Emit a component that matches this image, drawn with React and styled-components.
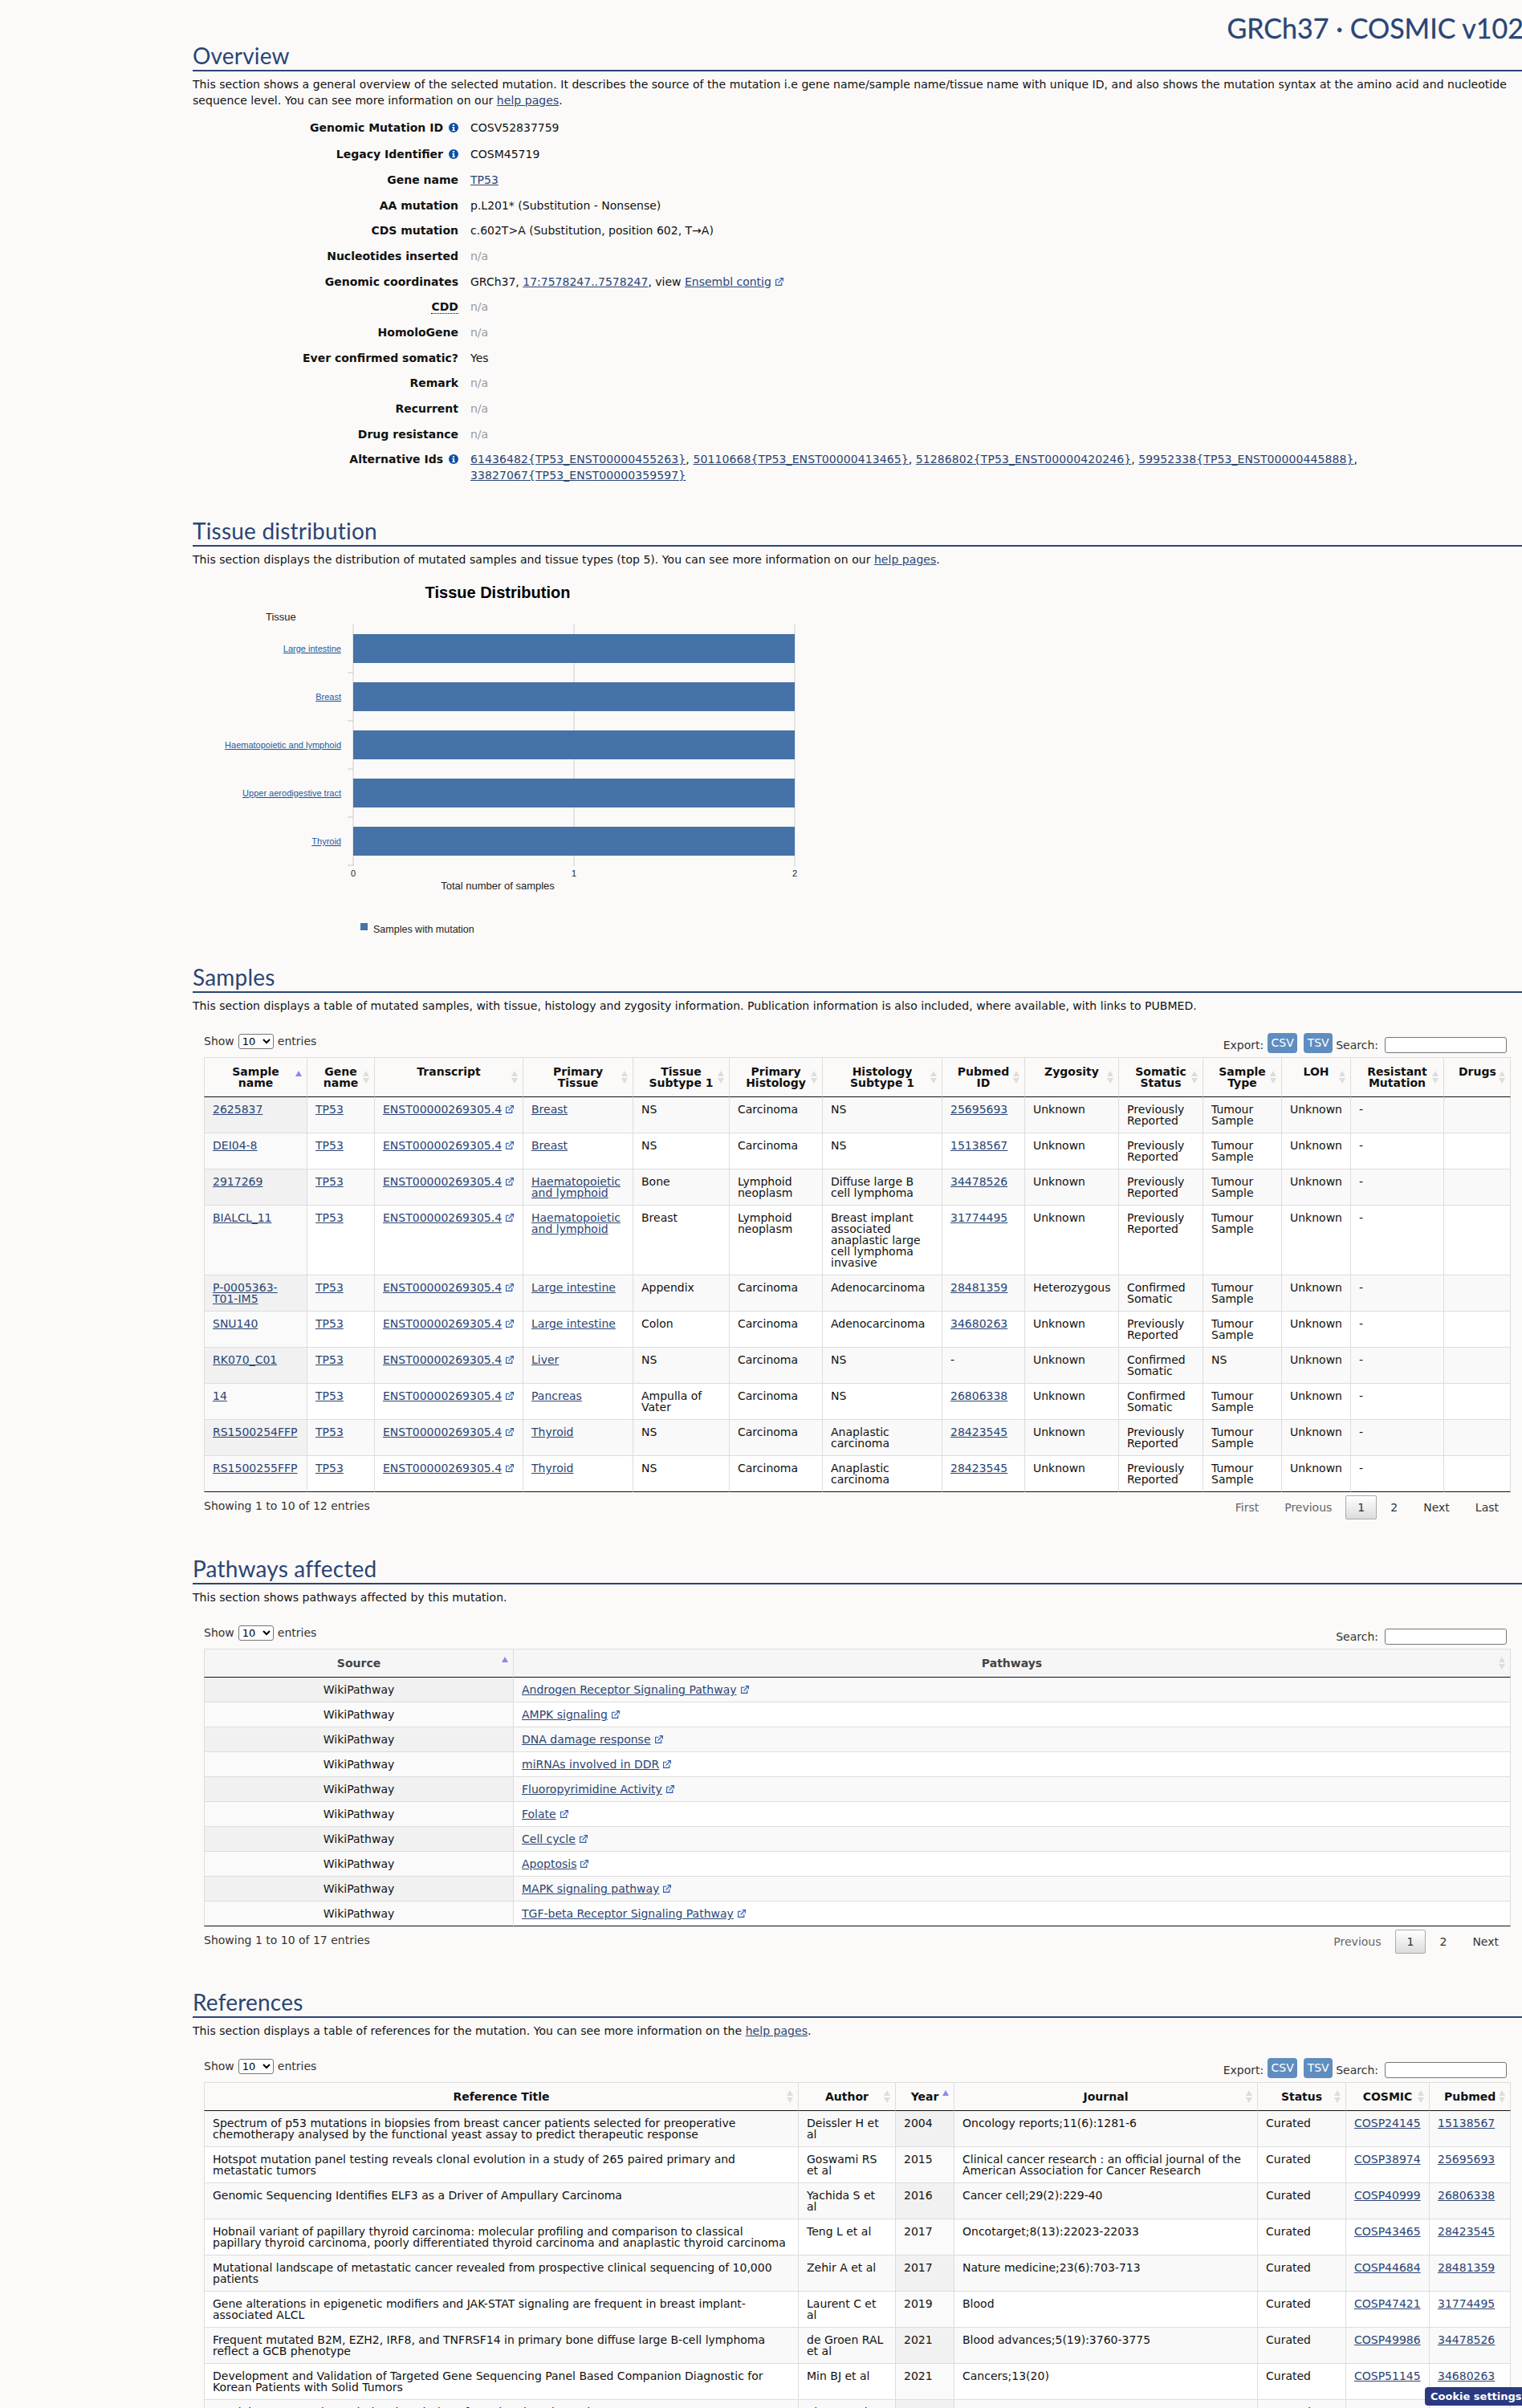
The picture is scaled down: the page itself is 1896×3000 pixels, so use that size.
import React from "react";
import styled, { createGlobalStyle } from "styled-components";

const Global = createGlobalStyle`
  html, body { margin: 0; height: 3000px; overflow: hidden; background: #fbfaf9; }
  body { font: 14px/20px "DejaVu Sans", Verdana, sans-serif; color: #111; }
  #root { height: 3000px; overflow: hidden; }
`;

const Page = styled.div`padding-left: 240px;`;
const TitleBar = styled.div`
  height: 51px; display: flex; justify-content: flex-end; overflow: hidden;
`;
const SiteTitle = styled.div`
  font: 400 34px/40px Lato, "Open Sans", sans-serif; color: #2b4574; margin: 15px -2px 0 0; white-space: nowrap;
  -webkit-text-stroke: 0.3px #2b4574;
`;
const Heading = styled.h2`
  margin: ${p => p.$top || 0}px 0 0; height: 36px; border-bottom: 2px solid #2b4574;
  font: 400 28px/36px Lato, "Open Sans", sans-serif; color: #2b4574; letter-spacing: 0.2px;
`;
const Intro = styled.p`margin: 6px 14px 0 0; font-size: 14px; line-height: 20px; letter-spacing: 0.04px;`;
const A = styled.a`color: #2b4574; text-decoration: underline;`;

const Facts = styled.div`margin-top: 7px;`;
const Fact = styled.div`
  display: grid; grid-template-columns: 331px 1fr; column-gap: 15px;
  padding: ${p => p.$tall ? "6.5px" : "5.85px"} 0; padding-right: 14px;
`;
const FactLabel = styled.div`text-align: right; font-weight: 700;`;
const AltIds = styled.div`letter-spacing: 0.09px;`;
const Dotted = styled.span`border-bottom: 1px dotted #000;`;
const Muted = styled.span`color: #999;`;
const InfoSvg = styled.svg`width: 12px; height: 12px; margin: -4px 0 -4px 7px; vertical-align: 3px;`;

const Info = () => (
  <InfoSvg viewBox="0 0 12 12">
    <circle cx="6" cy="6" r="6" fill="#0d4ea6" />
    <rect x="4.9" y="2" width="2.2" height="2" fill="#fff" />
    <path d="M4.2 5h2.9v4.1h.9v1H4.2v-1h.8V6h-.8z" fill="#fff" />
  </InfoSvg>
);
const ExtWrap = styled.span`white-space: nowrap;`;
const ExtSvg = styled.svg`width: 10px; height: 10px; margin: -3px 0 -3px 5px; vertical-align: 3px;`;
const Ext = () => (
  <ExtSvg viewBox="0 0 10 10" fill="none" stroke="#2a5aa8" strokeWidth="1.1">
    <path d="M4.5 2.2H.6v7.2h7.2V5.5" />
    <path d="M3.5 6.5L8.6 1.4M5.6.6h3.8v3.8" />
  </ExtSvg>
);

const ChartSvg = styled.svg`display: block; margin-top: 0;`;
const cats = ["Large intestine", "Breast", "Haematopoietic and lymphoid", "Upper aerodigestive tract", "Thyroid"];
const Chart = () => (
  <ChartSvg width="770" height="492" viewBox="240 707 770 492" fontFamily="'Liberation Sans', Arial, sans-serif">
    <text x="620" y="745" textAnchor="middle" fontSize="20" fontWeight="700" fill="#000">Tissue Distribution</text>
    <text x="331" y="773" fontSize="13" fill="#222">Tissue</text>
    {[440, 715, 990].map(x => <line key={x} x1={x} x2={x} y1="778" y2="1079" stroke="#ddd" strokeWidth="1.5" />)}
    {[838, 898, 958, 1018, 1078].map(y => <line key={y} x1="433" x2="440" y1={y} y2={y} stroke="#c8c8c8" />)}
    {cats.map((c, i) => (
      <g key={c}>
        <rect x="440" y={790 + i * 60} width="550" height="36" fill="#4572a7" />
        <text x="425" y={812 + i * 60} textAnchor="end" fontSize="11" fill="#1c5aa0" textDecoration="underline">{c}</text>
      </g>
    ))}
    {[[440, "0"], [715, "1"], [990, "2"]].map(([x, t]) => (
      <text key={t} x={x} y="1092" textAnchor="middle" fontSize="11" fill="#222">{t}</text>
    ))}
    <text x="620" y="1108" textAnchor="middle" fontSize="13" fill="#222">Total number of samples</text>
    <rect x="449" y="1150" width="9" height="9" fill="#4572a7" />
    <text x="465" y="1162" fontSize="12.5" fill="#222">Samples with mutation</text>
  </ChartSvg>
);

const Block = styled.div`margin: 25px 14px 0;`;
const Toolbar = styled.div`display: flex; justify-content: space-between; height: 29px;`;
const LenBox = styled.label`display: flex; align-items: flex-start; gap: 5px; color: #333; line-height: 19px;`;
const LenSelect = styled.select`
  width: 44px; height: 19px; font: 13px "DejaVu Sans", sans-serif; padding: 0; background: #fff;
  border: 1px solid #767676; border-radius: 3px; color: #000;
`;
const Tools = styled.div`display: flex; align-items: center; align-self: flex-end; margin: 0 5px 5px 0; height: 20px; color: #333;`;
const ExportBtn = styled.span`
  display: flex; align-items: center; justify-content: center; width: ${p => p.$w}px; height: 25px; margin-left: ${p => p.$ml}px;
  background: #5f8dc0; color: #fff; border-radius: 4px; position: relative; top: -3px;
`;
const SearchInput = styled.input`
  width: 152px; height: 20px; box-sizing: border-box; margin-left: 8px; background: #fff;
  border: 1px solid #767676; border-radius: 3px; padding: 0;
`;
const SearchLabel = styled.span`margin-left: 4px;`;

const Table = styled.table`
  width: 1628px; table-layout: fixed; border-collapse: separate; border-spacing: 0;
  line-height: 14px; font-size: 14px;
`;
const Col = styled.col`width: ${p => p.$w}px;`;
const Th = styled.th`
  position: relative; padding: 10px 18px; font-weight: 700; text-align: center; vertical-align: top;
  border-top: 1px solid #ddd; border-bottom: 1px solid #111; border-left: 1px solid #ddd;
  background: ${p => p.$bg || "transparent"}; color: ${p => p.$ink || "#111"};
  &:last-child { border-right: 1px solid #ddd; }
  &::before {
    content: ""; position: absolute; right: 6px; top: calc(50% - 8px);
    border: 4px solid transparent; border-top: 0; border-bottom: 7px solid ${p => p.$asc ? "#8a8ae8" : "#ddd"};
  }
  &::after {
    content: ${p => p.$asc ? "none" : '""'}; position: absolute; right: 6px; top: calc(50% + 1px);
    border: 4px solid transparent; border-bottom: 0; border-top: 7px solid #ddd;
  }
`;
const Tr = styled.tr`
  & > td { background: #fff; }
  & > td:nth-child(${p => p.$sorted}) { background: #fafafa; }
  &:nth-child(odd) > td { background: #f9f9f9; }
  &:nth-child(odd) > td:nth-child(${p => p.$sorted}) { background: #f1f1f1; }
  &:not(:first-child) > td { border-top: 1px solid #ddd; }
  &:last-child > td { border-bottom: 1px solid #111; }
`;
const Td = styled.td`
  padding: 8px 10px; vertical-align: top; border-left: 1px solid #ddd;
  text-align: ${p => p.$center ? "center" : "left"};
  &:last-child { border-right: 1px solid #ddd; }
`;

const Footer = styled.div`display: flex; justify-content: space-between; align-items: flex-start;`;
const InfoText = styled.div`padding-top: 10px; line-height: 14px; color: #333;`;
const Pager = styled.div`display: flex; margin-top: 4px;`;
const PageBtn = styled.span`
  height: 30px; box-sizing: border-box; padding: 0 14px; margin-left: 2px; display: flex; align-items: center;
  border: 1px solid ${p => p.$on ? "#aaa" : "transparent"}; border-radius: 2px;
  color: ${p => p.$off ? "#666" : "#333"};
  background: ${p => p.$on ? "linear-gradient(#fff, #dcdcdc)" : "transparent"};
`;
const Cookie = styled.div`
  position: fixed; right: 0; bottom: 3px; width: 121px; height: 23px; box-sizing: border-box; padding-left: 7px;
  background: #2a3a80; color: #fff; font-weight: 700; font-size: 13px; line-height: 23px; white-space: nowrap;
  overflow: hidden; border-radius: 4px 0 0 4px;
`;

const Toolbars = ({ exports }) => (
  <Toolbar>
    <LenBox>Show <LenSelect defaultValue="10"><option>10</option><option>25</option><option>50</option></LenSelect> entries</LenBox>
    <Tools>
      {exports && <>Export: <ExportBtn $w={37} $ml={5}>CSV</ExportBtn><ExportBtn $w={36} $ml={8}>TSV</ExportBtn></>}
      <SearchLabel>Search:</SearchLabel><SearchInput />
    </Tools>
  </Toolbar>
);
const Pages = ({ list }) => (
  <Pager>
    {list.map(t => <PageBtn key={t} $on={t === "1"} $off={t === "First" || t === "Previous"}>{t}</PageBtn>)}
  </Pager>
);

const L = ({ children }) => <A href="#">{children}</A>;
const E = ({ children }) => <ExtWrap><A href="#">{children}</A><Ext /></ExtWrap>;

const sampleHead = [["Sample name", 128, true], ["Gene name", 84], ["Transcript", 185], ["Primary Tissue", 137], ["Tissue Subtype 1", 120], ["Primary Histology", 116], ["Histology Subtype 1", 149], ["Pubmed ID", 103], ["Zygosity", 117], ["Somatic Status", 105], ["Sample Type", 98], ["LOH", 86], ["Resistant Mutation", 116], ["Drugs", 84]];
const PR = "Previously Reported", CS = "Confirmed Somatic", TS = "Tumour Sample";
const samples = [
  ["2625837", "Breast", "NS", "Carcinoma", "NS", "25695693", "Unknown", PR, TS],
  ["DEI04-8", "Breast", "NS", "Carcinoma", "NS", "15138567", "Unknown", PR, TS],
  ["2917269", "Haematopoietic and lymphoid", "Bone", "Lymphoid neoplasm", "Diffuse large B cell lymphoma", "34478526", "Unknown", PR, TS],
  ["BIALCL_11", "Haematopoietic and lymphoid", "Breast", "Lymphoid neoplasm", "Breast implant associated anaplastic large cell lymphoma invasive", "31774495", "Unknown", PR, TS],
  ["P-0005363-T01-IM5", "Large intestine", "Appendix", "Carcinoma", "Adenocarcinoma", "28481359", "Heterozygous", CS, TS],
  ["SNU140", "Large intestine", "Colon", "Carcinoma", "Adenocarcinoma", "34680263", "Unknown", PR, TS],
  ["RK070_C01", "Liver", "NS", "Carcinoma", "NS", "-", "Unknown", CS, "NS"],
  ["14", "Pancreas", "Ampulla of Vater", "Carcinoma", "NS", "26806338", "Unknown", CS, TS],
  ["RS1500254FFP", "Thyroid", "NS", "Carcinoma", "Anaplastic carcinoma", "28423545", "Unknown", PR, TS],
  ["RS1500255FFP", "Thyroid", "NS", "Carcinoma", "Anaplastic carcinoma", "28423545", "Unknown", PR, TS],
];
const pathways = ["Androgen Receptor Signaling Pathway", "AMPK signaling", "DNA damage response", "miRNAs involved in DDR", "Fluoropyrimidine Activity", "Folate", "Cell cycle", "Apoptosis", "MAPK signaling pathway", "TGF-beta Receptor Signaling Pathway"];
const refHead = [["Reference Title", 740], ["Author", 121], ["Year", 73, true], ["Journal", 378], ["Status", 110], ["COSMIC", 104], ["Pubmed", 102]];
const refs = [
  ["Spectrum of p53 mutations in biopsies from breast cancer patients selected for preoperative chemotherapy analysed by the functional yeast assay to predict therapeutic response", "Deissler H et al", "2004", "Oncology reports;11(6):1281-6", "COSP24145", "15138567"],
  ["Hotspot mutation panel testing reveals clonal evolution in a study of 265 paired primary and metastatic tumors", "Goswami RS et al", "2015", "Clinical cancer research : an official journal of the American Association for Cancer Research", "COSP38974", "25695693"],
  ["Genomic Sequencing Identifies ELF3 as a Driver of Ampullary Carcinoma", "Yachida S et al", "2016", "Cancer cell;29(2):229-40", "COSP40999", "26806338"],
  ["Hobnail variant of papillary thyroid carcinoma: molecular profiling and comparison to classical papillary thyroid carcinoma, poorly differentiated thyroid carcinoma and anaplastic thyroid carcinoma", "Teng L et al", "2017", "Oncotarget;8(13):22023-22033", "COSP43465", "28423545"],
  ["Mutational landscape of metastatic cancer revealed from prospective clinical sequencing of 10,000 patients", "Zehir A et al", "2017", "Nature medicine;23(6):703-713", "COSP44684", "28481359"],
  ["Gene alterations in epigenetic modifiers and JAK-STAT signaling are frequent in breast implant-associated ALCL", "Laurent C et al", "2019", "Blood", "COSP47421", "31774495"],
  ["Frequent mutated B2M, EZH2, IRF8, and TNFRSF14 in primary bone diffuse large B-cell lymphoma reflect a GCB phenotype", "de Groen RAL et al", "2021", "Blood advances;5(19):3760-3775", "COSP49986", "34478526"],
  ["Development and Validation of Targeted Gene Sequencing Panel Based Companion Diagnostic for Korean Patients with Solid Tumors", "Min BJ et al", "2021", "Cancers;13(20)", "COSP51145", "34680263"],
  ["Spatial Heterogeneity and Clonal Evolution of Head and Neck Carcinoma", "Kim S et al", "2022", "", "COSP52207", "35000000"],
];

const facts = [
  ["Genomic Mutation ID", "COSV52837759", true],
  ["Legacy Identifier", "COSM45719", true],
  ["Gene name", <L>TP53</L>],
  ["AA mutation", "p.L201* (Substitution - Nonsense)"],
  ["CDS mutation", "c.602T>A (Substitution, position 602, T→A)"],
  ["Nucleotides inserted", <Muted>n/a</Muted>],
  ["Genomic coordinates", <>GRCh37, <L>17:7578247..7578247</L>, view <E>Ensembl contig</E></>],
  [<Dotted>CDD</Dotted>, <Muted>n/a</Muted>],
  ["HomoloGene", <Muted>n/a</Muted>],
  ["Ever confirmed somatic?", "Yes"],
  ["Remark", <Muted>n/a</Muted>],
  ["Recurrent", <Muted>n/a</Muted>],
  ["Drug resistance", <Muted>n/a</Muted>],
];

export default function App() {
  return (
    <Page>
      <Global />
      <TitleBar><SiteTitle>GRCh37 · COSMIC v102</SiteTitle></TitleBar>

      <Heading>Overview</Heading>
      <Intro>This section shows a general overview of the selected mutation. It describes the source of the mutation i.e gene name/sample name/tissue name with unique ID, and also shows the mutation syntax at the amino acid and nucleotide sequence level. You can see more information on our <L>help pages</L>.</Intro>
      <Facts>
        {facts.map(([k, v, info], i) => (
          <Fact key={i} $tall={info}>
            <FactLabel>{k}{info && <Info />}</FactLabel>
            <div>{v}</div>
          </Fact>
        ))}
        <Fact>
          <FactLabel>Alternative Ids<Info /></FactLabel>
          <AltIds>
            <L>61436482{"{TP53_ENST00000455263}"}</L>, <L>50110668{"{TP53_ENST00000413465}"}</L>, <L>51286802{"{TP53_ENST00000420246}"}</L>, <L>59952338{"{TP53_ENST00000445888}"}</L>, <L>33827067{"{TP53_ENST00000359597}"}</L>
          </AltIds>
        </Fact>
      </Facts>

      <Heading $top={35}>Tissue distribution</Heading>
      <Intro>This section displays the distribution of mutated samples and tissue types (top 5). You can see more information on our <L>help pages</L>.</Intro>
      <Chart />

      <Heading>Samples</Heading>
      <Intro>This section displays a table of mutated samples, with tissue, histology and zygosity information. Publication information is also included, where available, with links to PUBMED.</Intro>
      <Block>
        <Toolbars exports />
        <Table>
          <colgroup>{sampleHead.map(h => <Col key={h[0]} $w={h[1]} />)}</colgroup>
          <thead><tr>{sampleHead.map(h => <Th key={h[0]} $asc={h[2]}>{h[0]}</Th>)}</tr></thead>
          <tbody>
            {samples.map(s => (
              <Tr key={s[0]} $sorted={1}>
                <Td><L>{s[0]}</L></Td>
                <Td><L>TP53</L></Td>
                <Td><E>ENST00000269305.4</E></Td>
                <Td><L>{s[1]}</L></Td>
                <Td>{s[2]}</Td>
                <Td>{s[3]}</Td>
                <Td>{s[4]}</Td>
                <Td>{s[5] === "-" ? "-" : <L>{s[5]}</L>}</Td>
                <Td>{s[6]}</Td>
                <Td>{s[7]}</Td>
                <Td>{s[8]}</Td>
                <Td>Unknown</Td>
                <Td>-</Td>
                <Td></Td>
              </Tr>
            ))}
          </tbody>
        </Table>
        <Footer>
          <InfoText>Showing 1 to 10 of 12 entries</InfoText>
          <Pages list={["First", "Previous", "1", "2", "Next", "Last"]} />
        </Footer>
      </Block>

      <Heading $top={43}>Pathways affected</Heading>
      <Intro>This section shows pathways affected by this mutation.</Intro>
      <Block>
        <Toolbars />
        <Table>
          <colgroup><Col $w={385} /><Col $w={1243} /></colgroup>
          <thead><tr>
            <Th $asc $bg="#f6f6f6" $ink="#444">Source</Th>
            <Th $bg="#f6f6f6" $ink="#444">Pathways</Th>
          </tr></thead>
          <tbody>
            {pathways.map(p => (
              <Tr key={p} $sorted={1}>
                <Td $center>WikiPathway</Td>
                <Td><E>{p}</E></Td>
              </Tr>
            ))}
          </tbody>
        </Table>
        <Footer>
          <InfoText>Showing 1 to 10 of 17 entries</InfoText>
          <Pages list={["Previous", "1", "2", "Next"]} />
        </Footer>
      </Block>

      <Heading $top={42}>References</Heading>
      <Intro>This section displays a table of references for the mutation. You can see more information on the <L>help pages</L>.</Intro>
      <Block>
        <Toolbars exports />
        <Table>
          <colgroup>{refHead.map(h => <Col key={h[0]} $w={h[1]} />)}</colgroup>
          <thead><tr>{refHead.map(h => <Th key={h[0]} $asc={h[2]}>{h[0]}</Th>)}</tr></thead>
          <tbody>
            {refs.map(r => (
              <Tr key={r[4]} $sorted={3}>
                <Td>{r[0]}</Td>
                <Td>{r[1]}</Td>
                <Td>{r[2]}</Td>
                <Td>{r[3]}</Td>
                <Td>Curated</Td>
                <Td><L>{r[4]}</L></Td>
                <Td><L>{r[5]}</L></Td>
              </Tr>
            ))}
          </tbody>
        </Table>
      </Block>
      <Cookie>Cookie settings</Cookie>
    </Page>
  );
}
